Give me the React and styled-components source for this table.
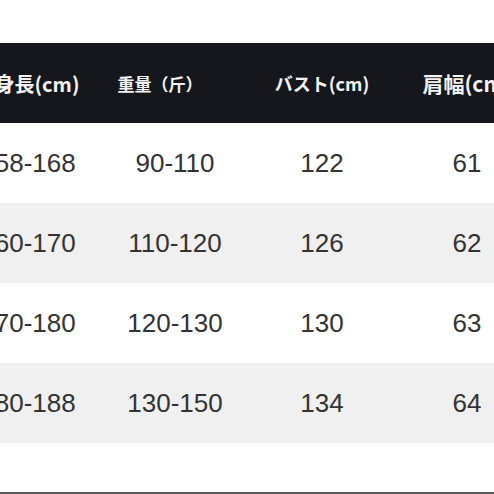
import React from 'react';
import styled, { createGlobalStyle } from 'styled-components';

const GlobalStyle = createGlobalStyle`
    html, body {
        margin: 0;
        padding: 0;
        background: #ffffff;
        overflow: hidden;
    }
`;

const columns = [
    { width: 148, header: '身長(cm)', headerSize: 20, padLeft: 18, padRight: 0 },
    { width: 146, header: '重量（斤）', headerSize: 17, padLeft: 0, padRight: 30 },
    { width: 148, header: 'バスト(cm)', headerSize: 18, padLeft: 0, padRight: 0 },
    { width: 142, header: '肩幅(cm)', headerSize: 21, padLeft: 0, padRight: 0 },
];

const rows = [
    ['158-168', '90-110', '122', '61'],
    ['160-170', '110-120', '126', '62'],
    ['170-180', '120-130', '130', '63'],
    ['180-188', '130-150', '134', '64'],
];

const App = () => {
    return (
        <>
            <GlobalStyle />
            <Page>
                <Table>
                    <HeaderRow>
                        {columns.map((col) => (
                            <HeaderCell
                                key={col.header}
                                $width={col.width}
                                $size={col.headerSize}
                                $padLeft={col.padLeft}
                                $padRight={col.padRight}
                            >
                                {col.header}
                            </HeaderCell>
                        ))}
                    </HeaderRow>
                    {rows.map((row, i) => (
                        <Row key={row[0]} $striped={i % 2 === 1}>
                            {row.map((value, j) => (
                                <Cell key={j} $width={columns[j].width}>
                                    {value}
                                </Cell>
                            ))}
                        </Row>
                    ))}
                </Table>
                <Footer />
            </Page>
        </>
    );
};

export default App;

const Page = styled.div`
    width: 494px;
    height: 494px;
    display: flex;
    flex-direction: column;
    padding-top: 43px;
    box-sizing: border-box;
    overflow: hidden;
`;

const Table = styled.div`
    display: flex;
    flex-direction: column;
    margin-left: -46px;
    width: 584px;
`;

const HeaderRow = styled.div`
    display: flex;
    height: 80px;
    align-items: center;
    background: #16171c;
`;

const HeaderCell = styled.div`
    flex: 0 0 ${(p) => p.$width}px;
    box-sizing: border-box;
    padding-left: ${(p) => p.$padLeft}px;
    padding-right: ${(p) => p.$padRight}px;
    text-align: center;
    color: #f4f4f4;
    font-family: 'Noto Sans CJK JP', 'Noto Sans', sans-serif;
    font-weight: 700;
    font-size: ${(p) => p.$size}px;
    white-space: nowrap;
`;

const Row = styled.div`
    display: flex;
    height: 80px;
    align-items: center;
    background: ${(p) => (p.$striped ? '#f0f0f0' : '#ffffff')};
`;

const Cell = styled.div`
    flex: 0 0 ${(p) => p.$width}px;
    text-align: center;
    color: #333333;
    font-family: 'Liberation Sans', Arial, sans-serif;
    font-size: 26px;
    white-space: nowrap;
`;

const Footer = styled.div`
    flex: 1;
    border-bottom: 2px solid #5a5a5a;
`;
